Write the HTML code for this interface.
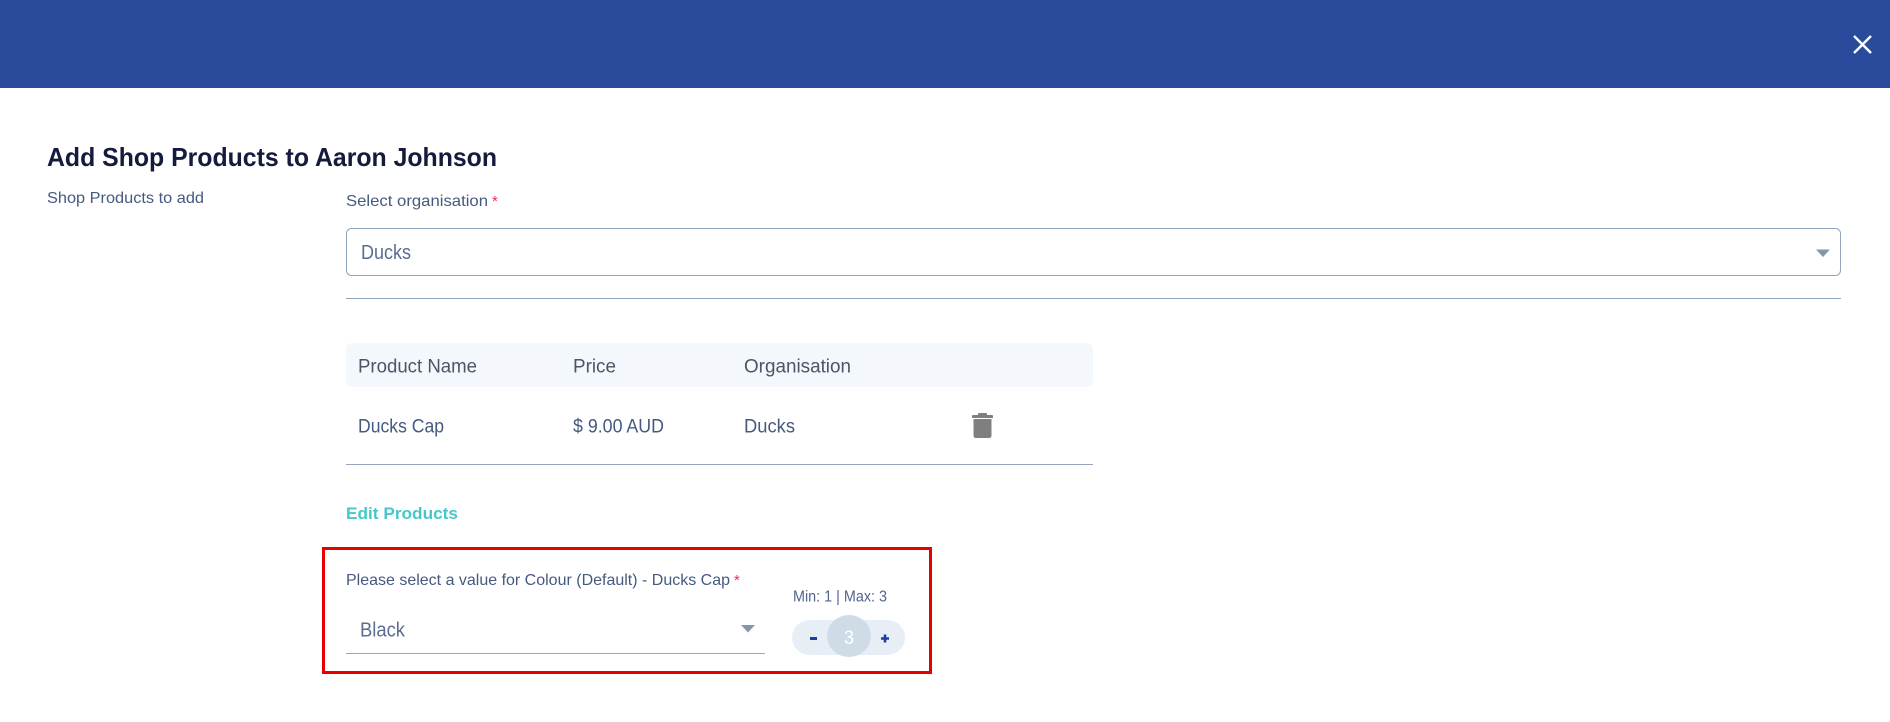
<!DOCTYPE html>
<html lang="en">
<head>
<meta charset="utf-8">
<title>Add Shop Products</title>
<style>
html,body{margin:0;padding:0;background:#fff;width:1890px;height:722px;overflow:hidden}
svg{display:block}
text{font-family:"Liberation Sans",sans-serif;fill:#46597f}
</style>
</head>
<body>
<svg width="1890" height="722" viewBox="0 0 1890 722" xmlns="http://www.w3.org/2000/svg">
<rect width="1890" height="722" fill="#fff"/>
<rect width="1890" height="88" fill="#2a4b9b"/>
<path d="M1854 36L1871 53M1871 36L1854 53" stroke="#fff" stroke-width="2.400" fill="none"/>

<text x="47" y="166" font-size="26" font-weight="700" style="fill:#151b3d" textLength="450" lengthAdjust="spacingAndGlyphs">Add Shop Products to Aaron Johnson</text>
<text x="47" y="203" font-size="16" textLength="157" lengthAdjust="spacingAndGlyphs">Shop Products to add</text>
<text x="346" y="206" font-size="16" textLength="142" lengthAdjust="spacingAndGlyphs">Select organisation</text>
<text x="492" y="206" font-size="15" style="fill:#e8305a">*</text>

<rect x="346.500" y="228.500" width="1494" height="47" rx="5" fill="#fff" stroke="#93a6bc"/>
<text x="361" y="259" font-size="20" style="fill:#5a6c92" textLength="50" lengthAdjust="spacingAndGlyphs">Ducks</text>
<path d="M1816 249.500H1830L1823 257Z" fill="#8795ab"/>
<rect x="346" y="298" width="1495" height="1" fill="#93a6bc"/>

<rect x="346" y="343" width="747" height="44" rx="6" fill="#f4f7fb"/>
<text x="358" y="372.500" font-size="19" style="fill:#4d5565" textLength="119" lengthAdjust="spacingAndGlyphs">Product Name</text>
<text x="573" y="372.500" font-size="19" style="fill:#4d5565" textLength="43" lengthAdjust="spacingAndGlyphs">Price</text>
<text x="744" y="372.500" font-size="19" style="fill:#4d5565" textLength="107" lengthAdjust="spacingAndGlyphs">Organisation</text>

<text x="358" y="432.500" font-size="19" textLength="86" lengthAdjust="spacingAndGlyphs">Ducks Cap</text>
<text x="573" y="432.500" font-size="19" textLength="91" lengthAdjust="spacingAndGlyphs">$ 9.00 AUD</text>
<text x="744" y="432.500" font-size="19" textLength="51" lengthAdjust="spacingAndGlyphs">Ducks</text>
<path d="M978 415V413.800Q978 413 979 413H986Q987 413 987 413.800V415H992Q993 415 993 416V418H972V416Q972 415 973 415ZM973.500 419H991.500V435.500Q991.500 438 989 438H976Q973.500 438 973.500 435.500Z" fill="#7f7f7f"/>
<rect x="346" y="464" width="747" height="1" fill="#93a6bc"/>

<text x="346" y="519" font-size="17" font-weight="700" style="fill:#45c8ca" textLength="112" lengthAdjust="spacingAndGlyphs">Edit Products</text>

<rect x="323.500" y="548.500" width="607" height="124" fill="none" stroke="#e60000" stroke-width="3"/>
<text x="346" y="585" font-size="16" textLength="384" lengthAdjust="spacingAndGlyphs">Please select a value for Colour (Default) - Ducks Cap</text>
<text x="734" y="585" font-size="15" style="fill:#e8305a">*</text>
<text x="360" y="636.500" font-size="20" style="fill:#5a6c92" textLength="45" lengthAdjust="spacingAndGlyphs">Black</text>
<path d="M741 625H755L748 632.500Z" fill="#8795ab"/>
<rect x="346" y="653" width="419" height="1" fill="#9aa8bc"/>

<text x="793" y="601.500" font-size="16" style="fill:#52658c" textLength="94" lengthAdjust="spacingAndGlyphs">Min: 1 | Max: 3</text>
<rect x="792" y="620" width="113" height="35" rx="17.500" fill="#e8eef6"/>
<ellipse cx="849" cy="636" rx="22" ry="21" fill="#d0dbe8"/>
<text x="849" y="644" font-size="19" text-anchor="middle" style="fill:#fff" textLength="10" lengthAdjust="spacingAndGlyphs">3</text>
<rect x="810" y="637" width="7" height="3" fill="#1f3f9c"/>
<path d="M881 638.500H889M885 634.500V642.500" stroke="#1f3f9c" stroke-width="2.600" fill="none"/>
</svg>
</body>
</html>
